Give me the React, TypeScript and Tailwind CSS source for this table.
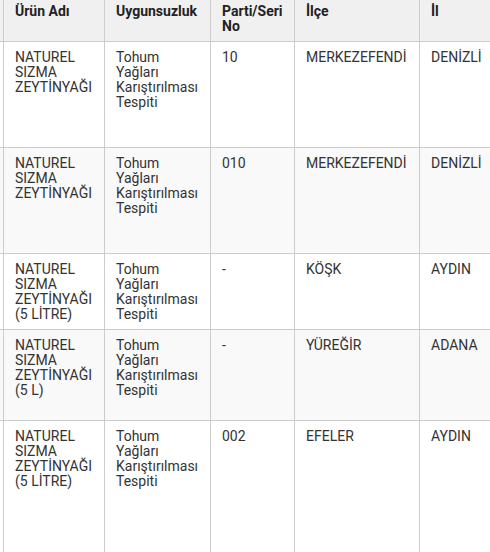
const headers: string[][] = [["Ürün Adı"], ["Uygunsuzluk"], ["Parti/Seri", "No"], ["İlçe"], ["İl"]];

type Row = { cells: string[][]; h: string; bg: string };

const tohum = ["Tohum", "Yağları", "Karıştırılması", "Tespiti"];

const rows: Row[] = [
  { cells: [["NATUREL", "SIZMA", "ZEYTİNYAĞI"], tohum, ["10"], ["MERKEZEFENDİ"], ["DENİZLİ"]], h: "h-[106px]", bg: "bg-white" },
  { cells: [["NATUREL", "SIZMA", "ZEYTİNYAĞI"], tohum, ["010"], ["MERKEZEFENDİ"], ["DENİZLİ"]], h: "h-[106px]", bg: "bg-[#f9f9f9]" },
  { cells: [["NATUREL", "SIZMA", "ZEYTİNYAĞI", "(5 LİTRE)"], tohum, ["-"], ["KÖŞK"], ["AYDIN"]], h: "h-[76px]", bg: "bg-white" },
  { cells: [["NATUREL", "SIZMA", "ZEYTİNYAĞI", "(5 L)"], tohum, ["-"], ["YÜREĞİR"], ["ADANA"]], h: "h-[91px]", bg: "bg-[#f9f9f9]" },
  { cells: [["NATUREL", "SIZMA", "ZEYTİNYAĞI", "(5 LİTRE)"], tohum, ["002"], ["EFELER"], ["AYDIN"]], h: "h-[140px]", bg: "bg-white" },
];

// column widths include the 1px right border
const cols = ["w-[101px]", "w-[106px]", "w-[84px]", "w-[125px]", "w-[120px]"];

function Lines({ lines }: { lines: string[] }) {
  return (
    <>
      {lines.map((l, i) => (
        <div key={i} className="whitespace-nowrap">
          {l}
        </div>
      ))}
    </>
  );
}

export default function App() {
  return (
    <div className="w-[490px] h-[552px] overflow-hidden bg-white font-['Roboto',sans-serif] text-[14px] leading-[15px]">
      <div className="flex w-max flex-col">
        <div className="flex h-[42px] border-b border-[#cccccc] bg-[#f0f0f0] font-bold text-[#222222]">
          <div className="w-[4px] shrink-0 border-r border-[#cccccc]" />
          {headers.map((h, i) => (
            <div key={i} className={`${cols[i]} shrink-0 border-r border-[#cccccc] px-[11px] pt-[4px]`}>
              <Lines lines={h} />
            </div>
          ))}
        </div>
        {rows.map((r, ri) => (
          <div key={ri} className={`flex ${r.h} ${r.bg} border-b border-[#cccccc] text-[#333333]`}>
            <div className="w-[4px] shrink-0 border-r border-[#cccccc]" />
            {r.cells.map((c, ci) => (
              <div key={ci} className={`${cols[ci]} shrink-0 border-r border-[#cccccc] px-[11px] pt-[8px]`}>
                <Lines lines={c} />
              </div>
            ))}
          </div>
        ))}
      </div>
    </div>
  );
}
